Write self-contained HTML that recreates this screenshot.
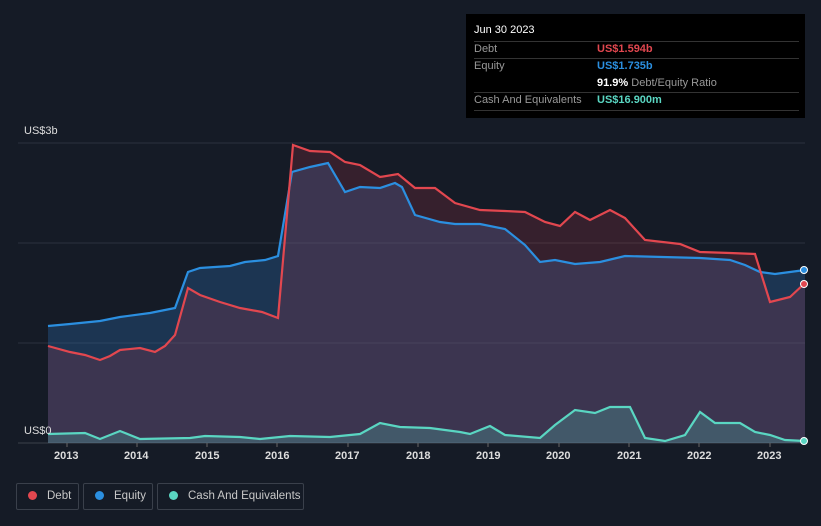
<!DOCTYPE html><html><head><style>
body{margin:0;width:821px;height:526px;background:#151b26;font-family:"Liberation Sans",sans-serif;overflow:hidden;position:relative}
.tt{position:absolute;left:466px;top:14px;width:339px;height:104px;background:#000}
.tt .r{position:absolute;left:8px;right:6px;font-size:11px;color:#999}
.leg{position:absolute;top:483px;height:27px;border:1px solid #3a404b;border-radius:2px;color:#c8c8c8;font-size:11.5px;line-height:25px;box-sizing:border-box;white-space:nowrap}
.leg i{display:inline-block;width:9px;height:9px;border-radius:50%;margin:0 10px 0 11px;vertical-align:-1px}
.ax{position:absolute;top:450px;font-size:11px;color:#ddd;font-weight:bold}
</style></head><body>
<svg width="821" height="526" style="position:absolute;left:0;top:0">
<line x1="18" y1="143" x2="805" y2="143" stroke="#2c323d"/>
<line x1="18" y1="243" x2="805" y2="243" stroke="#2c323d"/>
<line x1="18" y1="343" x2="805" y2="343" stroke="#2c323d"/>
<line x1="18" y1="443" x2="805" y2="443" stroke="#3a404b"/>
<polygon fill="#2f73b8" fill-opacity="0.3" points="48,443 48,326 70,324 100,321 120,317 150,313 175,308 188,272 200,268 230,266 245,262 265,260 278,256 292,172 310,167 328,163 345,192 360,187 380,188 395,183 402,187 415,215 440,222 455,224 480,224 505,229 525,245 540,262 555,260 575,264 600,262 625,256 700,258 730,260 745,265 760,272 775,274 790,272 805,270 805,443"/>
<polygon fill="#c0394a" fill-opacity="0.2" points="48,443 48,346 70,352 85,355 100,360 110,356 120,350 140,348 155,352 165,346 175,335 188,288 200,295 220,302 240,308 262,312 278,318 293,145 310,151 330,152 345,162 360,165 380,177 398,174 415,188 435,188 455,203 480,210 505,211 525,212 545,222 560,226 575,212 590,220 610,210 625,218 645,240 680,244 700,252 730,253 755,254 770,302 790,297 805,283 805,443"/>
<polyline fill="none" stroke="#2b8fe0" stroke-width="2.2" points="48,326 70,324 100,321 120,317 150,313 175,308 188,272 200,268 230,266 245,262 265,260 278,256 292,172 310,167 328,163 345,192 360,187 380,188 395,183 402,187 415,215 440,222 455,224 480,224 505,229 525,245 540,262 555,260 575,264 600,262 625,256 700,258 730,260 745,265 760,272 775,274 790,272 805,270"/>
<polyline fill="none" stroke="#e2474f" stroke-width="2.2" points="48,346 70,352 85,355 100,360 110,356 120,350 140,348 155,352 165,346 175,335 188,288 200,295 220,302 240,308 262,312 278,318 293,145 310,151 330,152 345,162 360,165 380,177 398,174 415,188 435,188 455,203 480,210 505,211 525,212 545,222 560,226 575,212 590,220 610,210 625,218 645,240 680,244 700,252 730,253 755,254 770,302 790,297 805,283"/>
<polygon fill="#5ad6c2" fill-opacity="0.22" points="48,443 48,434 85,433 100,439 120,431 140,439 190,438 205,436 240,437 260,439 290,436 330,437 360,434 380,423 400,427 430,428 460,432 470,434 490,426 505,435 540,438 555,425 575,410 595,413 610,407 630,407 645,438 665,441 685,435 700,412 715,423 740,423 755,432 770,435 785,440 805,441 805,443"/>
<polyline fill="none" stroke="#5ad6c2" stroke-width="2.2" points="48,434 85,433 100,439 120,431 140,439 190,438 205,436 240,437 260,439 290,436 330,437 360,434 380,423 400,427 430,428 460,432 470,434 490,426 505,435 540,438 555,425 575,410 595,413 610,407 630,407 645,438 665,441 685,435 700,412 715,423 740,423 755,432 770,435 785,440 805,441"/>
<circle cx="804" cy="270" r="3.5" fill="#2b8fe0" stroke="#fff" stroke-width="1"/>
<circle cx="804" cy="284" r="3.5" fill="#e2474f" stroke="#fff" stroke-width="1"/>
<circle cx="804" cy="441" r="3.5" fill="#5ad6c2" stroke="#fff" stroke-width="1"/>
<g stroke="#666"><line x1="67" y1="443" x2="67" y2="447"/><line x1="137" y1="443" x2="137" y2="447"/><line x1="207" y1="443" x2="207" y2="447"/><line x1="277" y1="443" x2="277" y2="447"/><line x1="348" y1="443" x2="348" y2="447"/><line x1="418" y1="443" x2="418" y2="447"/><line x1="488" y1="443" x2="488" y2="447"/><line x1="559" y1="443" x2="559" y2="447"/><line x1="629" y1="443" x2="629" y2="447"/><line x1="699" y1="443" x2="699" y2="447"/><line x1="770" y1="443" x2="770" y2="447"/></g>
</svg>
<div style="position:absolute;left:24px;top:125px;font-size:11px;color:#ddd">US$3b</div>
<div style="position:absolute;left:24px;top:425px;font-size:11px;color:#ddd">US$0</div>
<div class="ax" style="left:54px">2013</div><div class="ax" style="left:124px">2014</div><div class="ax" style="left:195px">2015</div><div class="ax" style="left:265px">2016</div><div class="ax" style="left:335px">2017</div><div class="ax" style="left:406px">2018</div><div class="ax" style="left:476px">2019</div><div class="ax" style="left:546px">2020</div><div class="ax" style="left:617px">2021</div><div class="ax" style="left:687px">2022</div><div class="ax" style="left:757px">2023</div>
<div class="tt">
<div class="r" style="top:10px;color:#fff">Jun 30 2023</div>
<div style="position:absolute;left:8px;right:6px;top:27px;border-top:1px solid #333"></div>
<div class="r" style="top:29px">Debt<span style="position:absolute;left:123px;color:#e2474f;font-weight:bold">US$1.594b</span></div>
<div style="position:absolute;left:8px;right:6px;top:44px;border-top:1px solid #333"></div>
<div class="r" style="top:46px">Equity<span style="position:absolute;left:123px;color:#2b8fe0;font-weight:bold">US$1.735b</span></div>
<div class="r" style="top:63px"><span style="position:absolute;left:123px;white-space:nowrap"><b style="color:#fff">91.9%</b> Debt/Equity Ratio</span>&nbsp;</div>
<div style="position:absolute;left:8px;right:6px;top:78px;border-top:1px solid #333"></div>
<div class="r" style="top:80px">Cash And Equivalents<span style="position:absolute;left:123px;color:#5ad6c2;font-weight:bold">US$16.900m</span></div>
<div style="position:absolute;left:8px;right:6px;top:96px;border-top:1px solid #333"></div>
</div>
<div class="leg" style="left:16px;width:63px"><i style="background:#e2474f"></i>Debt</div>
<div class="leg" style="left:83px;width:70px"><i style="background:#2b8fe0"></i>Equity</div>
<div class="leg" style="left:157px;width:147px"><i style="background:#5ad6c2"></i>Cash And Equivalents</div>
</body></html>
